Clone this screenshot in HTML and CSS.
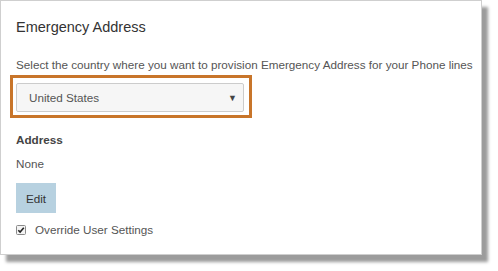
FILE: index.html
```html
<!DOCTYPE html>
<html>
<head>
<meta charset="utf-8">
<link rel="stylesheet" href="styles.css">
</head>
<body>
<div class="panel">
  <h2 class="title">Emergency Address</h2>
  <p class="desc">Select the country where you want to provision Emergency Address for your Phone lines</p>
  <div class="highlight">
    <div class="select">
      <span class="select-value">United States</span>
      <span class="select-arrow">&#9660;</span>
    </div>
  </div>
  <div class="label">Address</div>
  <div class="value">None</div>
  <button class="btn">Edit</button>
  <label class="check-row">
    <span class="check-box">
      <svg width="10" height="10" viewBox="0 0 10 10">
        <rect x="0.5" y="0.5" width="9" height="9" rx="1" fill="#f4f4f4" stroke="#8a8a8a"/>
        <path d="M2.3 5.2 L4.1 7 L7.8 2.8" fill="none" stroke="#222" stroke-width="1.6"/>
      </svg>
    </span>
    <span class="check-text">Override User Settings</span>
  </label>
</div>
</body>
</html>
```
FILE: styles.css
```css
html, body {
  margin: 0;
  padding: 0;
  background: #ffffff;
}
body {
  font-family: "Liberation Sans", Arial, sans-serif;
  width: 498px;
  height: 271px;
  overflow: hidden;
}
.panel {
  box-sizing: border-box;
  width: 482px;
  height: 255px;
  border: 1px solid #cfcfcf;
  background: #ffffff;
  box-shadow: 6px 7px 3px #9c9c9c;
  padding: 18px 15px 0 15px;
  display: flex;
  flex-direction: column;
  align-items: flex-start;
}
.title {
  margin: 0;
  font-size: 14.5px;
  line-height: 17px;
  font-weight: normal;
  color: #333333;
}
.desc {
  margin: 22px 0 0 0;
  font-size: 11.7px;
  line-height: 14px;
  color: #555555;
  white-space: nowrap;
}
.highlight {
  box-sizing: border-box;
  margin: 3px 0 0 -6px;
  width: 242px;
  height: 43px;
  border: 3px solid #c8752a;
  padding: 5px 5px 3px 3px;
}
.select {
  box-sizing: border-box;
  width: 228px;
  height: 29px;
  border: 1px solid #cccccc;
  border-radius: 2px;
  background: #f6f6f6;
  display: flex;
  align-items: center;
  justify-content: space-between;
  padding: 0 6px 0 12px;
}
.select-value {
  font-size: 11.7px;
  color: #555555;
}
.select-arrow {
  font-size: 9px;
  color: #444444;
}
.label {
  margin-top: 15px;
  font-size: 11.7px;
  line-height: 14px;
  font-weight: bold;
  color: #444444;
}
.value {
  margin-top: 10px;
  font-size: 11.7px;
  line-height: 14px;
  color: #555555;
}
.btn {
  margin-top: 12px;
  width: 40px;
  height: 30px;
  border: none;
  border-radius: 0;
  background: #b7d1e0;
  font-family: inherit;
  font-size: 11.7px;
  color: #333333;
  padding: 0;
}
.check-row {
  margin-top: 10px;
  display: flex;
  align-items: center;
  gap: 9px;
  font-size: 11.7px;
  line-height: 14px;
  color: #555555;
}
.check-box {
  display: flex;
  width: 10px;
  height: 10px;
}
```
